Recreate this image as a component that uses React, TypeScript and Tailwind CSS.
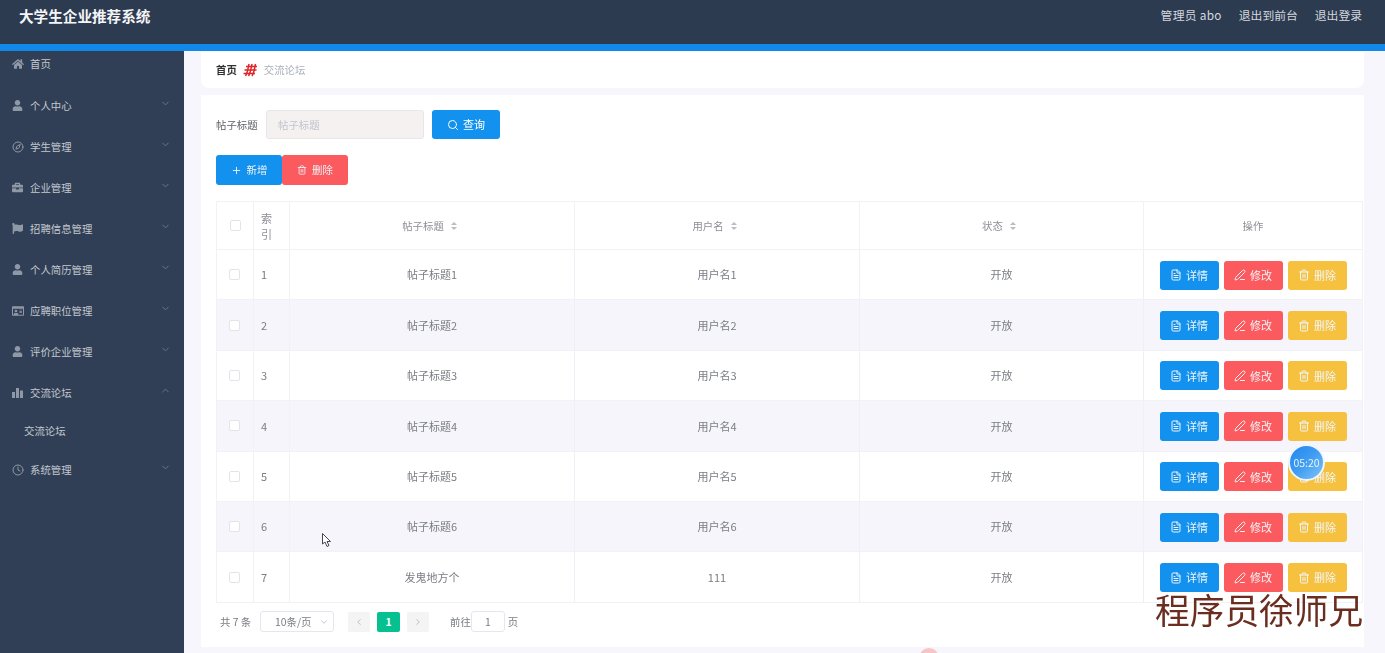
import { ChevronDown, ChevronLeft, ChevronRight, ChevronUp, Compass, Clock, FileText, PenLine, Plus, Search, Trash2 } from "lucide-react";
import { FaBriefcase, FaFlag, FaHome, FaUser, FaRegIdCard } from "react-icons/fa";

const font = "font-['Noto_Sans_CJK_SC','Noto_Sans',sans-serif]";

const Bars = () => (
  <svg width="11" height="11" viewBox="0 0 11 11" fill="currentColor">
    <rect x="0" y="5" width="3" height="6" />
    <rect x="4" y="1" width="3" height="10" />
    <rect x="8" y="3.5" width="3" height="7.5" />
  </svg>
);

const menu = [
  { label: "个人中心", icon: <FaUser size={11} /> },
  { label: "学生管理", icon: <Compass size={12} /> },
  { label: "企业管理", icon: <FaBriefcase size={11} /> },
  { label: "招聘信息管理", icon: <FaFlag size={11} /> },
  { label: "个人简历管理", icon: <FaUser size={11} /> },
  { label: "应聘职位管理", icon: <FaRegIdCard size={12} /> },
  { label: "评价企业管理", icon: <FaUser size={11} /> },
];

const rows = [
  { id: 1, title: "帖子标题1", user: "用户名1" },
  { id: 2, title: "帖子标题2", user: "用户名2" },
  { id: 3, title: "帖子标题3", user: "用户名3" },
  { id: 4, title: "帖子标题4", user: "用户名4" },
  { id: 5, title: "帖子标题5", user: "用户名5" },
  { id: 6, title: "帖子标题6", user: "用户名6" },
  { id: 7, title: "发鬼地方个", user: "111" },
];

const cols = "grid grid-cols-[37px_36px_285px_285px_284px_219px]";

const NavItem = ({ icon, label, open }: { icon: React.ReactNode; label: string; open?: boolean }) => (
  <div className="flex h-[41px] items-center pl-3 pr-[13px] text-[10.4px] text-[#c3c8d0]">
    <span className="flex w-[18px] justify-start text-[#8f98a6]">{icon}</span>
    <span className="flex-1">{label}</span>
    {open ? (
      <ChevronUp size={11} className="mb-1 text-[#6f7a8a]" />
    ) : (
      <ChevronDown size={11} className="mb-1 text-[#6f7a8a]" />
    )}
  </div>
);

const Sort = () => (
  <span className="ml-[7px] flex flex-col gap-[2px]">
    <span className="h-0 w-0 border-x-[3.5px] border-b-[3.5px] border-x-transparent border-b-[#b8bcc4]" />
    <span className="h-0 w-0 border-x-[3.5px] border-t-[3.5px] border-x-transparent border-t-[#b8bcc4]" />
  </span>
);

const Check = () => <span className="block h-[11px] w-[11px] rounded-[2px] border border-[#e2e4ea] bg-white" />;

const ActionBtn = ({ color, icon, label }: { color: string; icon: React.ReactNode; label: string }) => (
  <button className={`flex h-[29px] w-[59px] items-center justify-center gap-[4px] rounded-[3px] text-[11px] text-[#f2f5f8] ${color}`}>
    {icon}
    {label}
  </button>
);

export default function App() {
  return (
    <div className={`relative h-[653px] w-full overflow-hidden bg-[#f6f6fc] ${font}`}>
      <div className="flex h-full flex-col blur-[0.5px]">
        <header className="flex h-[51px] shrink-0 items-start justify-between border-b-[7px] border-[#1089e8] bg-[#2d3b50] pl-[19px] pr-[23px]">
          <span className="mt-[5px] text-[14.6px] font-bold leading-[22px] text-[#f4f5f7]">大学生企业推荐系统</span>
          <div className="mt-[5px] flex gap-[17px] text-[11.8px] leading-5 text-[#d3d8df]">
            <span className="tracking-[0.3px]">管理员 abo</span>
            <span>退出到前台</span>
            <span>退出登录</span>
          </div>
        </header>

        <div className="flex min-h-0 flex-1">
          <aside className="w-[184px] shrink-0 bg-[#303f55]">
            <div className="flex h-[26px] items-center pl-3 text-[10.4px] text-[#c3c8d0]">
              <span className="flex w-[18px] text-[#8f98a6]">
                <FaHome size={12} />
              </span>
              首页
            </div>
            <div className="mt-[8px]">
              {menu.map((m) => (
                <NavItem key={m.label} icon={m.icon} label={m.label} />
              ))}
              <NavItem icon={<Bars />} label="交流论坛" open />
              <div className="flex h-[36px] items-center pl-6 text-[10.4px] text-[#c3c8d0]">交流论坛</div>
              <NavItem icon={<Clock size={12} />} label="系统管理" />
            </div>
          </aside>

          <main className="min-w-0 flex-1 pl-[17px] pr-[21px]">
            <div className="mt-px flex h-[36px] items-center gap-[6px] rounded-b-lg bg-white pl-[15px] text-[10.4px]">
              <span className="font-bold text-[#303133]">首页</span>
              <svg width="15" height="14" viewBox="0 0 15 14" fill="none" stroke="#e0262a" strokeWidth="1.5">
                <path d="M6 1 C5 5 5 9 2.5 13 M9 1 C8 5 8 9 5.5 13 M12.5 1 C11.5 5 11.5 9 9 13" />
                <path d="M3 3.5 H14 M1.5 7 H13.5 M0.5 10.5 H12" />
              </svg>
              <span className="text-[#aab0b8]">交流论坛</span>
            </div>

            <div className="mt-[7px] h-[552px] bg-white pl-[15px] pr-px pt-[15px]">
              <div className="flex h-[29px] items-center text-[10.4px] text-[#606266]">
                <span className="w-[50px]">帖子标题</span>
                <div className="flex h-full w-[158px] items-center rounded-[3px] border border-[#e8e6e6] bg-[#f5f1f1] pl-[11px] text-[#c0c4cc]">
                  帖子标题
                </div>
                <button className="ml-2 flex h-full w-[68px] items-center justify-center gap-[4px] rounded-[3px] bg-[#1391ee] text-[11px] text-white">
                  <Search size={12} />
                  查询
                </button>
              </div>

              <div className="mt-[16px] flex h-[30px] text-[10.4px] text-[#eef2f6]">
                <button className="flex w-[66px] items-center justify-center gap-[5px] rounded-[3px] bg-[#1391ee]">
                  <Plus size={11} />
                  新增
                </button>
                <button className="flex w-[66px] items-center justify-center gap-[5px] rounded-[3px] bg-[#fb5a5e]">
                  <Trash2 size={10} />
                  删除
                </button>
              </div>

              <div className="mt-[16px] border-l border-t border-[#f1f2f6] text-[#7a7d83]">
                <div className={`${cols} h-[48px] border-b border-[#f1f2f6] text-[10.4px] text-[#8c8f95]`}>
                  <div className="flex items-center justify-center border-r border-[#f1f2f6]">
                    <Check />
                  </div>
                  <div className="flex items-center border-r border-[#f1f2f6] pl-[7px] text-[11px] leading-4">
                    索
                    <br />引
                  </div>
                  {["帖子标题", "用户名", "状态"].map((h) => (
                    <div key={h} className="flex items-center justify-center border-r border-[#f1f2f6] pr-[5px]">
                      {h}
                      <Sort />
                    </div>
                  ))}
                  <div className="flex items-center justify-center border-r border-[#f1f2f6]">操作</div>
                </div>

                {rows.map((r) => (
                  <div
                    key={r.id}
                    className={`${cols} h-[50.4px] border-b border-[#f1f2f6] text-[11px] ${r.id % 2 === 0 ? "bg-[#f5f5fb]" : "bg-white"}`}
                  >
                    <div className="flex items-center justify-center border-r border-[#f1f2f6] pr-[2px]">
                      <Check />
                    </div>
                    <div className="flex items-center border-r border-[#f1f2f6] pl-[7px]">{r.id}</div>
                    <div className="flex items-center justify-center border-r border-[#eef0f5]">{r.title}</div>
                    <div className="flex items-center justify-center border-r border-[#eef0f5]">{r.user}</div>
                    <div className="flex items-center justify-center border-r border-[#eef0f5]">开放</div>
                    <div className="flex items-center justify-center gap-[5px] border-r border-[#f1f2f6] pt-px">
                      <ActionBtn color="bg-[#1391ee]" icon={<FileText size={12} />} label="详情" />
                      <ActionBtn color="bg-[#fb5a5e]" icon={<PenLine size={12} />} label="修改" />
                      <ActionBtn color="bg-[#f5c13f]" icon={<Trash2 size={12} />} label="删除" />
                    </div>
                  </div>
                ))}
              </div>

              <div className="flex h-[38px] items-center pl-1 text-[10.4px] text-[#7a7d83]">
                <span className="w-[40px]">共 7 条</span>
                <div className="flex h-[21px] w-[74px] items-center justify-between rounded-[3px] border border-[#e4e7ed] pl-[14px] pr-[4px]">
                  10条/页
                  <ChevronDown size={10} className="text-[#b8bcc4]" />
                </div>
                <span className="ml-[14px] flex h-[20px] w-[22px] items-center justify-center rounded-[2px] bg-[#f4f4f5] text-[#b0b4bb]">
                  <ChevronLeft size={10} />
                </span>
                <span className="ml-[7px] flex h-[20px] w-[23px] items-center justify-center rounded-[2px] bg-[#06c18f] font-bold text-white">
                  1
                </span>
                <span className="ml-[7px] flex h-[20px] w-[22px] items-center justify-center rounded-[2px] bg-[#f4f4f5] text-[#b0b4bb]">
                  <ChevronRight size={10} />
                </span>
                <span className="ml-[21px]">前往</span>
                <span className="flex h-[21px] w-[34px] items-center justify-center rounded-[3px] border border-[#e4e7ed]">1</span>
                <span className="ml-[3px]">页</span>
              </div>
            </div>
          </main>
        </div>

        {/* timer bubble */}
        <div className="absolute left-[1288px] top-[444px] flex h-[37px] w-[37px] items-center justify-center rounded-full border-2 border-[#eef5fc] bg-gradient-to-br from-[#1f86ee] via-[#3f9df2] to-[#7fc4f6] text-[10.5px] text-[#e8f3fc]">
          05:20
        </div>
        {/* pink thing peeking in at the bottom */}
        <div className="absolute left-[919px] top-[648px] h-5 w-5 rounded-full bg-[#f5c6c6]" />
        {/* mouse cursor */}
        <svg className="absolute left-[322px] top-[533px]" width="10" height="15" viewBox="0 0 10 15">
          <path d="M0.5 0.5 V11 L3 9 L5 13.5 L7 12.5 L5 8.5 H8.5 Z" fill="#fff" stroke="#44474d" strokeWidth="1" />
        </svg>
      </div>

      {/* watermark */}
      <div className="absolute left-[1155px] top-[586px] whitespace-nowrap text-[34.7px] leading-[46px] text-[#6b2d1f]">
        程序员徐师兄
      </div>
    </div>
  );
}
